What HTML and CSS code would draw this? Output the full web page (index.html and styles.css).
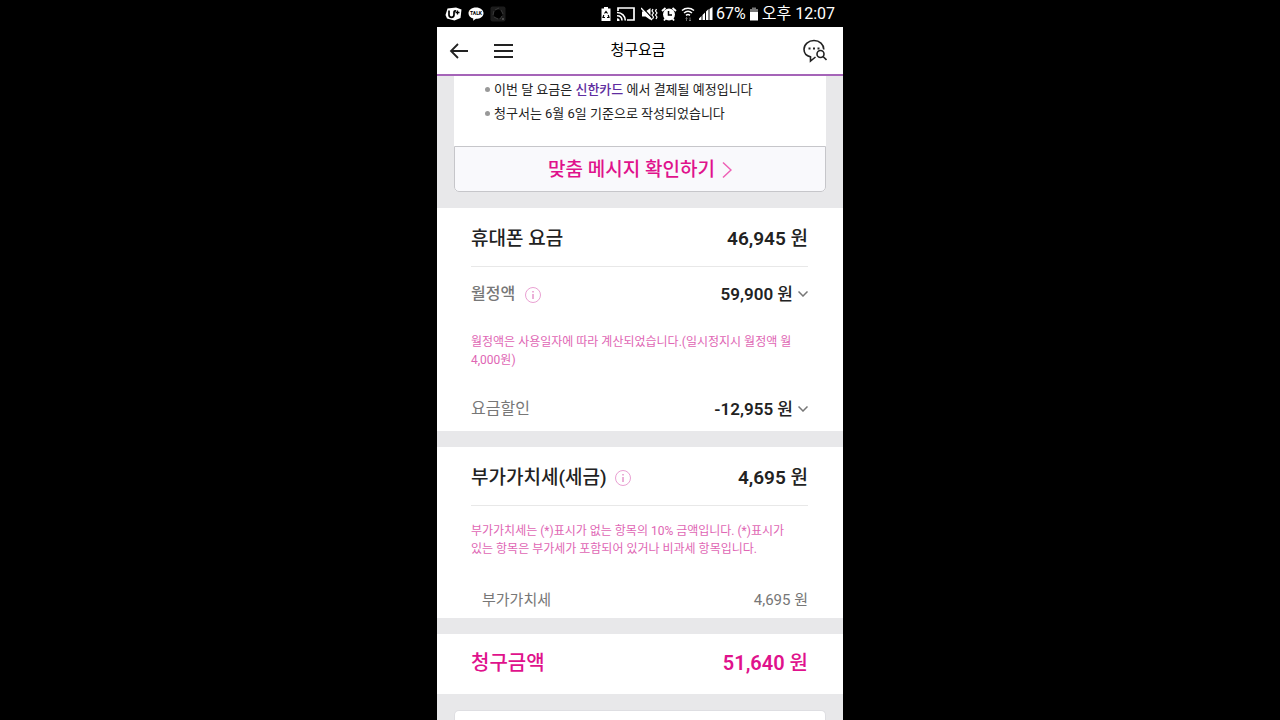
FILE: index.html
```html
<!DOCTYPE html>
<html lang="ko">
<head>
    <meta charset="UTF-8">
    <meta name="viewport" content="width=device-width, initial-scale=1.0">
    <title>청구요금</title>
    <link rel="stylesheet" href="styles.css">
</head>
<body>
    <div class="phone">
        <div class="status-bar">
            <div class="status-left">
                <svg width="17" height="14" viewBox="0 0 17 14">
                    <path d="M2.500 1.500L11 .5l5.500 2-1 8.500-6 2.500L2 11.500.5 8z" fill="#fff"/>
                    <path d="M4 3.500v4.300c0 3.400 5 3.400 5 0V5.500c0-1.500 1-1.700 2.200-1.700" fill="none" stroke="#000" stroke-width="1.700"/>
                    <path d="M10.500 5.500h4M12.500 3.500v4" stroke="#000" stroke-width="1.300"/>
                </svg>
                <svg width="16" height="14" viewBox="0 0 16 14">
                    <path d="M8 0.500c4.400 0 7.500 2.500 7.500 5.700S12.400 11.800 8 11.800L5 13.800l.3-2.400C2.300 10.600.5 8.600.5 6.200.5 3 3.600.5 8 .5z" fill="#fff"/>
                    <text x="8" y="8" text-anchor="middle" class="talk">TALK</text>
                </svg>
                <svg width="16" height="16" viewBox="0 0 16 16">
                    <rect x="0.500" y="0.500" width="15" height="15" rx="2" fill="#1c1c1c"/>
                    <circle cx="8" cy="8" r="4.500" fill="#000"/>
                    <path d="M5 4L9 2M11 4l2 4M12 10l-2 3M8 13l-4-2M3 9l1-4" stroke="#3a3a3a"/>
                    <path d="M13 12v2" stroke="#777"/>
                </svg>
            </div>
            <div class="status-right">
                <svg width="10" height="14" viewBox="0 0 10 14">
                    <path d="M3 0h4v1.500h2.500V14H.5V1.500H3z" fill="#fff"/>
                    <path d="M3.500 6.500L5 4.500l1.500 2M7.200 8l.8 2.500H6M4 10.500H2L2.800 8" fill="none" stroke="#000" stroke-width="1.200"/>
                </svg>
                <svg class="cast" width="18" height="14" viewBox="0 0 18 14">
                    <path d="M1 4V1h16v12h-7" fill="none" stroke="#fff" stroke-width="1.700"/>
                    <path d="M0 5.500c5 0 8.300 3.500 8.300 8M0 8.700c3 0 5 2 5 4.800" fill="none" stroke="#fff" stroke-width="1.600"/>
                    <path d="M0 11.200a2.500 2.500 0 0 1 2.500 2.800H0z" fill="#fff"/>
                </svg>
                <svg width="17" height="14" viewBox="0 0 17 14">
                    <path d="M1 4.500h3.500L9.500 1v12L4.500 9.500H1z" fill="#fff"/>
                    <path d="M1 0l11 12" stroke="#000" stroke-width="1.200"/>
                    <path d="M0 1l11 12" stroke="#fff" stroke-width="1.400"/>
                    <path d="M12 2l-1 2 1.500 2-1.500 2 1.500 2-1 2M15.500 2l-1 2 1.500 2-1.500 2 1.500 2-1 2" fill="none" stroke="#fff" stroke-width="1.200"/>
                </svg>
                <svg width="16" height="14" viewBox="0 0 16 14">
                    <circle cx="8" cy="7.500" r="6" fill="#fff"/>
                    <path d="M1 4l3.500-3M15 4l-3.500-3M3 13.500l1.500-2M13 13.500l-1.500-2" stroke="#fff" stroke-width="1.800"/>
                    <path d="M7.500 4V8H11" fill="none" stroke="#000" stroke-width="1.500"/>
                </svg>
                <svg width="16" height="14" viewBox="0 0 16 14">
                    <path d="M2 3.500c3.500-3 8.500-3 12 0M4 6c2.500-2.200 5.500-2.200 8 0M6 8.300c1.300-1 2.700-1 4 0" fill="none" stroke="#fff" stroke-width="1.500"/>
                    <path d="M6.500 14v-3.500M5.500 11.500l1-1 1 1M10 10.500V14M9 13l1 1 1-1" fill="none" stroke="#888" stroke-width="0.800"/>
                </svg>
                <svg width="14" height="13" viewBox="0 0 14 13">
                    <path d="M0 13v-1.500L2.500 9v4zM3.500 13V8L6 5.500V13zM7 13V4.500L9.500 2v11z" fill="#fff"/>
                    <path d="M10.500 13V2L13.500 0v13z" fill="#fff"/>
                </svg>
                <span>67%</span>
                <svg width="10" height="14" viewBox="0 0 10 14">
                    <path d="M3 0.500h4V2h2v3H1V2h2z" fill="#777"/>
                    <path d="M1 5h8v8.500H1z" fill="#fff"/>
                </svg>
                <span>오후 12:07</span>
            </div>
        </div>

        <header class="app-bar">
            <div class="app-bar-side">
                <button class="icon-button" aria-label="뒤로">
                    <svg width="20" height="16" viewBox="0 0 20 16" fill="none" stroke="#222" stroke-width="1.800">
                        <path d="M19 8H2.500M9 1L2 8l7 7"/>
                    </svg>
                </button>
                <button class="icon-button" aria-label="메뉴">
                    <svg width="20" height="16" viewBox="0 0 20 16" fill="none" stroke="#222" stroke-width="2">
                        <path d="M0 2h19M0 8h19M0 14h19"/>
                    </svg>
                </button>
            </div>
            <h1>청구요금</h1>
            <div class="app-bar-side end">
                <button class="icon-button" aria-label="상담 검색">
                    <svg width="24" height="24" viewBox="0 0 24 24" fill="none" stroke="#222" stroke-width="1.600">
                        <path d="M20.800 10.500C20.800 5.500 16.500 1.500 11 1.500S1 5.500 1 10.300c0 3.900 2.800 6.700 6.500 7.600V22l5-4"/>
                        <circle cx="17.500" cy="15" r="3.500"/>
                        <path d="M20 17.500l3.500 3.500"/>
                        <path d="M5.500 9.500h2M10 9.500h2M14.500 9.500h2" stroke-width="2"/>
                    </svg>
                </button>
            </div>
        </header>

        <main class="content">
            <section class="message-card">
                <ul class="message-list">
                    <li>이번 달 요금은 <strong>신한카드</strong> 에서 결제될 예정입니다</li>
                    <li>청구서는 6월 6일 기준으로 작성되었습니다</li>
                </ul>
                <button class="message-button">
                    맞춤 메시지 확인하기
                    <svg width="10" height="18" viewBox="0 0 10 18" fill="none" stroke="#ee5fb5" stroke-width="1.500">
                        <path d="M1 1.500L9 9l-8 7.500"/>
                    </svg>
                </button>
            </section>

            <section class="panel">
                <div class="panel-head">
                    <h2>휴대폰 요금</h2>
                    <span class="amount">46,945 <span class="unit">원</span></span>
                </div>
                <div class="row">
                    <span class="label strong">월정액
                        <button class="info" aria-label="월정액 안내">
                            <svg width="16" height="16" viewBox="0 0 16 16" fill="none" stroke="#e9a0d2">
                                <circle cx="8" cy="8" r="7.500"/>
                                <path d="M8 7v5M8 4v1.500" stroke="#d860b0"/>
                            </svg>
                        </button>
                    </span>
                    <button class="value">
                        <span>59,900 <span class="unit">원</span></span>
                        <svg width="10" height="6" viewBox="0 0 10 6" fill="none" stroke="#777" stroke-width="1.500">
                            <path d="M.5.500L5 5 9.500.5"/>
                        </svg>
                    </button>
                </div>
                <p class="note">월정액은 사용일자에 따라 계산되었습니다.(일시정지시 월정액 월 4,000원)</p>
                <div class="row last">
                    <span class="label">요금할인</span>
                    <button class="value">
                        <span>-12,955 <span class="unit">원</span></span>
                        <svg width="10" height="6" viewBox="0 0 10 6" fill="none" stroke="#777" stroke-width="1.500">
                            <path d="M.5.500L5 5 9.500.5"/>
                        </svg>
                    </button>
                </div>
            </section>

            <section class="panel">
                <div class="panel-head">
                    <h2>부가가치세(세금)
                        <button class="info" aria-label="부가가치세 안내">
                            <svg width="16" height="16" viewBox="0 0 16 16" fill="none" stroke="#e9a0d2">
                                <circle cx="8" cy="8" r="7.500"/>
                                <path d="M8 7v5M8 4v1.500" stroke="#d860b0"/>
                            </svg>
                        </button>
                    </h2>
                    <span class="amount">4,695 <span class="unit">원</span></span>
                </div>
                <p class="note">부가가치세는 (*)표시가 없는 항목의 10% 금액입니다. (*)표시가 있는 항목은 부가세가 포함되어 있거나 비과세 항목입니다.</p>
                <div class="row sub">
                    <span>부가가치세</span>
                    <span>4,695 원</span>
                </div>
            </section>

            <section class="panel total">
                <h2>청구금액</h2>
                <span class="amount">51,640 <span class="unit">원</span></span>
            </section>

            <section class="next-card"></section>
        </main>
    </div>
</body>
</html>
```
FILE: styles.css
```css
:root {
    --page-bg: #e8e8ea;
    --text-color: #222;
    --muted-color: #777;
    --pink: #e0128c;
    --note-pink: #e066b4;
    --purple: #5f2da0;
}

* {
    box-sizing: border-box;
    margin: 0;
    padding: 0;
}

body {
    background: #000;
    color: var(--text-color);
    font-family: Roboto, "Noto Sans CJK KR", sans-serif;
}

button {
    display: flex;
    align-items: center;
    border: none;
    background: none;
    color: inherit;
    font: inherit;
    cursor: pointer;
}

svg {
    display: block;
    flex: none;
}

.phone {
    display: flex;
    flex-direction: column;
    max-width: 406px;
    height: 100vh;
    margin: 0 auto;
    background: var(--page-bg);
    overflow: hidden;
}

/* status bar */
.status-bar {
    display: flex;
    flex: none;
    justify-content: space-between;
    align-items: center;
    height: 27px;
    padding: 0 8px;
    background: #000;
    color: #fff;
    font-size: 16px;
    line-height: 24px;
}

.status-left,
.status-right {
    display: flex;
    align-items: center;
    gap: 6px;
}

.status-right {
    gap: 3px;
}

.cast {
    margin: 0 3px;
}

.talk {
    fill: #000;
    font-size: 5px;
    font-weight: 700;
}

/* app bar */
.app-bar {
    display: grid;
    flex: none;
    grid-template-columns: 1fr auto 1fr;
    align-items: center;
    height: 49px;
    padding: 0 16px 4px 12px;
    background: #fff;
    border-bottom: 2px solid #a564b8;
}

.app-bar h1 {
    font-size: 15px;
    font-weight: 400;
    color: #000;
}

.app-bar-side {
    display: flex;
    gap: 25px;
    padding-top: 4px;
}

.end {
    justify-content: flex-end;
}

/* content */
.content {
    display: flex;
    flex: 1;
    flex-direction: column;
    gap: 16px;
    min-height: 0;
    overflow: hidden;
}

.message-card {
    flex: none;
    margin: 0 17px;
    background: #fff;
    border-radius: 0 0 5px 5px;
}

.message-list {
    padding: 2px 30px 20px;
    list-style: none;
    font-size: 13px;
    line-height: 24px;
}

.message-list li {
    display: flex;
    align-items: center;
    white-space: pre;
}

.message-list li::before {
    content: "";
    width: 5px;
    height: 5px;
    margin: 0 4px 2px 1px;
    border-radius: 50%;
    background: #999;
}

.message-list strong {
    color: var(--purple);
    font-weight: 500;
}

.message-button {
    justify-content: center;
    gap: 7px;
    width: 100%;
    height: 46px;
    padding-bottom: 3px;
    border: 1px solid #c6c6ca;
    border-radius: 0 0 5px 5px;
    background: #f9f9fc;
    color: var(--pink);
    font-size: 19px;
    font-weight: 500;
}

.message-button svg {
    margin-top: 4px;
}

.panel {
    flex: none;
    padding: 0 35px 0 34px;
    background: #fff;
}

.panel-head {
    display: flex;
    justify-content: space-between;
    align-items: center;
    height: 59px;
    padding-bottom: 2px;
    border-bottom: 1px solid #e8e8e8;
}

.panel h2 {
    display: flex;
    align-items: center;
    gap: 8px;
    font-size: 19px;
    font-weight: 500;
}

.amount {
    font-size: 19px;
    font-weight: 600;
}

.unit {
    font-weight: 500;
}

.info {
    margin-top: 5px;
}

.row {
    display: flex;
    justify-content: space-between;
    align-items: center;
    height: 50px;
}

.label {
    display: flex;
    align-items: center;
    gap: 10px;
    color: var(--muted-color);
    font-size: 16px;
}

.strong {
    font-weight: 500;
}

.value {
    gap: 5px;
    font-size: 17px;
    font-weight: 600;
}

.value svg {
    margin-top: 4px;
}

.note {
    margin: 16px 0;
    color: var(--note-pink);
    font-size: 12px;
    line-height: 18px;
    word-break: keep-all;
}

.last {
    height: 46px;
    padding-bottom: 2px;
}

.sub {
    height: 44px;
    padding: 4px 0 0 11px;
    color: var(--muted-color);
    font-size: 15px;
}

.total {
    display: flex;
    justify-content: space-between;
    align-items: center;
    height: 60px;
    padding-bottom: 5px;
    color: var(--pink);
}

.total h2,
.total .amount {
    font-size: 20px;
}

.next-card {
    flex: 1;
    margin: 0 17px;
    background: #fff;
    border: 1px solid #dedee2;
    border-bottom: none;
    border-radius: 5px 5px 0 0;
}
```
